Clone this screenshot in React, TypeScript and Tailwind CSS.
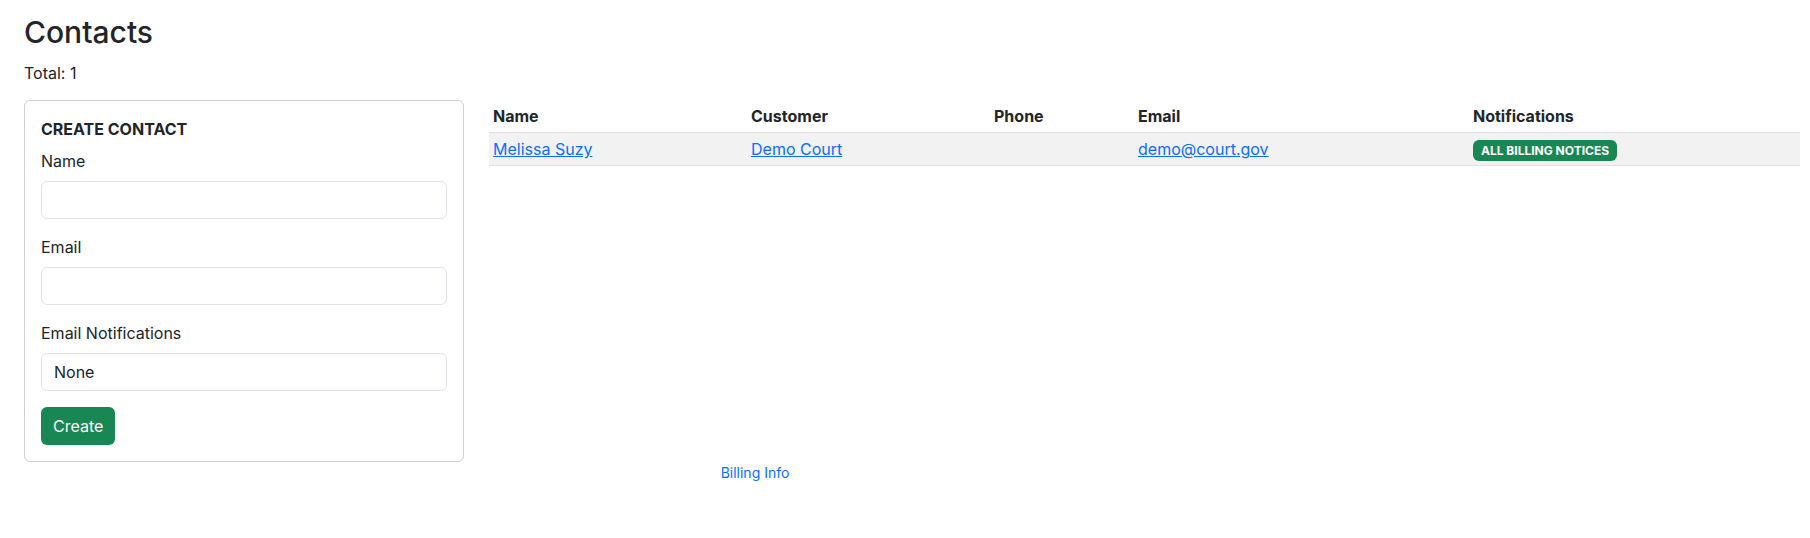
import React from 'react';

const font = { fontFamily: 'Inter, "Noto Sans", "Liberation Sans", sans-serif' };

interface Contact {
  id: number;
  name: string;
  customer: string;
  phone: string;
  email: string;
  notifications: string;
}

const contacts: Contact[] = [
  { id: 1, name: 'Melissa Suzy', customer: 'Demo Court', phone: '', email: 'demo@court.gov', notifications: 'All Billing Notices' },
];

function Field({ label, children }: { label: string; children: React.ReactNode }) {
  return (
    <div className="mb-4">
      <label className="block mb-2 text-base leading-6">{label}</label>
      {children}
    </div>
  );
}

function CreateContactCard() {
  return (
    <div className="w-[440px] shrink-0 border border-[#d0d0d0] rounded-md p-4">
      <h5 className="text-base leading-6 font-bold uppercase mb-2">Create Contact</h5>
      <Field label="Name">
        <input className="block w-full h-[38px] px-3 border border-[#dee2e6] rounded-md outline-none" />
      </Field>
      <Field label="Email">
        <input className="block w-full h-[38px] px-3 border border-[#dee2e6] rounded-md outline-none" />
      </Field>
      <Field label="Email Notifications">
        <select className="block w-full h-[38px] px-3 border border-[#dee2e6] rounded-md bg-white appearance-none outline-none text-base">
          <option>None</option>
          <option>All Billing Notices</option>
        </select>
      </Field>
      <button className="h-[38px] px-3 rounded-md bg-[#198754] text-white text-base leading-6">Create</button>
    </div>
  );
}

function ContactsTable() {
  return (
    <table className="flex-1 border-collapse text-left text-base leading-6 self-start">
      <thead>
        <tr className="border-b border-[#dee2e6]">
          <th className="w-[258px] p-1 font-bold">Name</th>
          <th className="w-[243px] p-1 font-bold">Customer</th>
          <th className="w-[144px] p-1 font-bold">Phone</th>
          <th className="w-[335px] p-1 font-bold">Email</th>
          <th className="p-1 font-bold">Notifications</th>
        </tr>
      </thead>
      <tbody>
        {contacts.map((c) => (
          <tr key={c.id} className="bg-[#f2f2f2] border-b border-[#dee2e6]">
            <td className="p-1">
              <a href="#" className="text-[#0d6efd] underline">{c.name}</a>
            </td>
            <td className="p-1">
              <a href="#" className="text-[#0d6efd] underline">{c.customer}</a>
            </td>
            <td className="p-1">{c.phone}</td>
            <td className="p-1">
              <a href="#" className="text-[#0d6efd] underline">{c.email}</a>
            </td>
            <td className="p-1 align-middle">
              <span className="inline-block bg-[#198754] text-white text-[12px] leading-none font-bold uppercase px-[8px] py-[4.2px] rounded-md align-middle">
                {c.notifications}
              </span>
            </td>
          </tr>
        ))}
      </tbody>
    </table>
  );
}

export default function App() {
  return (
    <div className="min-h-[538px] bg-white text-[#212529]" style={font}>
      <div className="pl-6 pr-[10px] pt-[13px]">
        <h2 className="text-[30px] leading-[38px] font-medium mb-[10px]">Contacts</h2>
        <p className="text-base leading-6 mb-[15px]">Total: {contacts.length}</p>
        <div className="flex gap-[25px]">
          <CreateContactCard />
          <ContactsTable />
        </div>
      </div>
      <footer className="w-[1510px] text-center text-sm leading-[21px]">
        <a href="#" className="text-[#0d6efd]">Billing Info</a>
      </footer>
    </div>
  );
}
